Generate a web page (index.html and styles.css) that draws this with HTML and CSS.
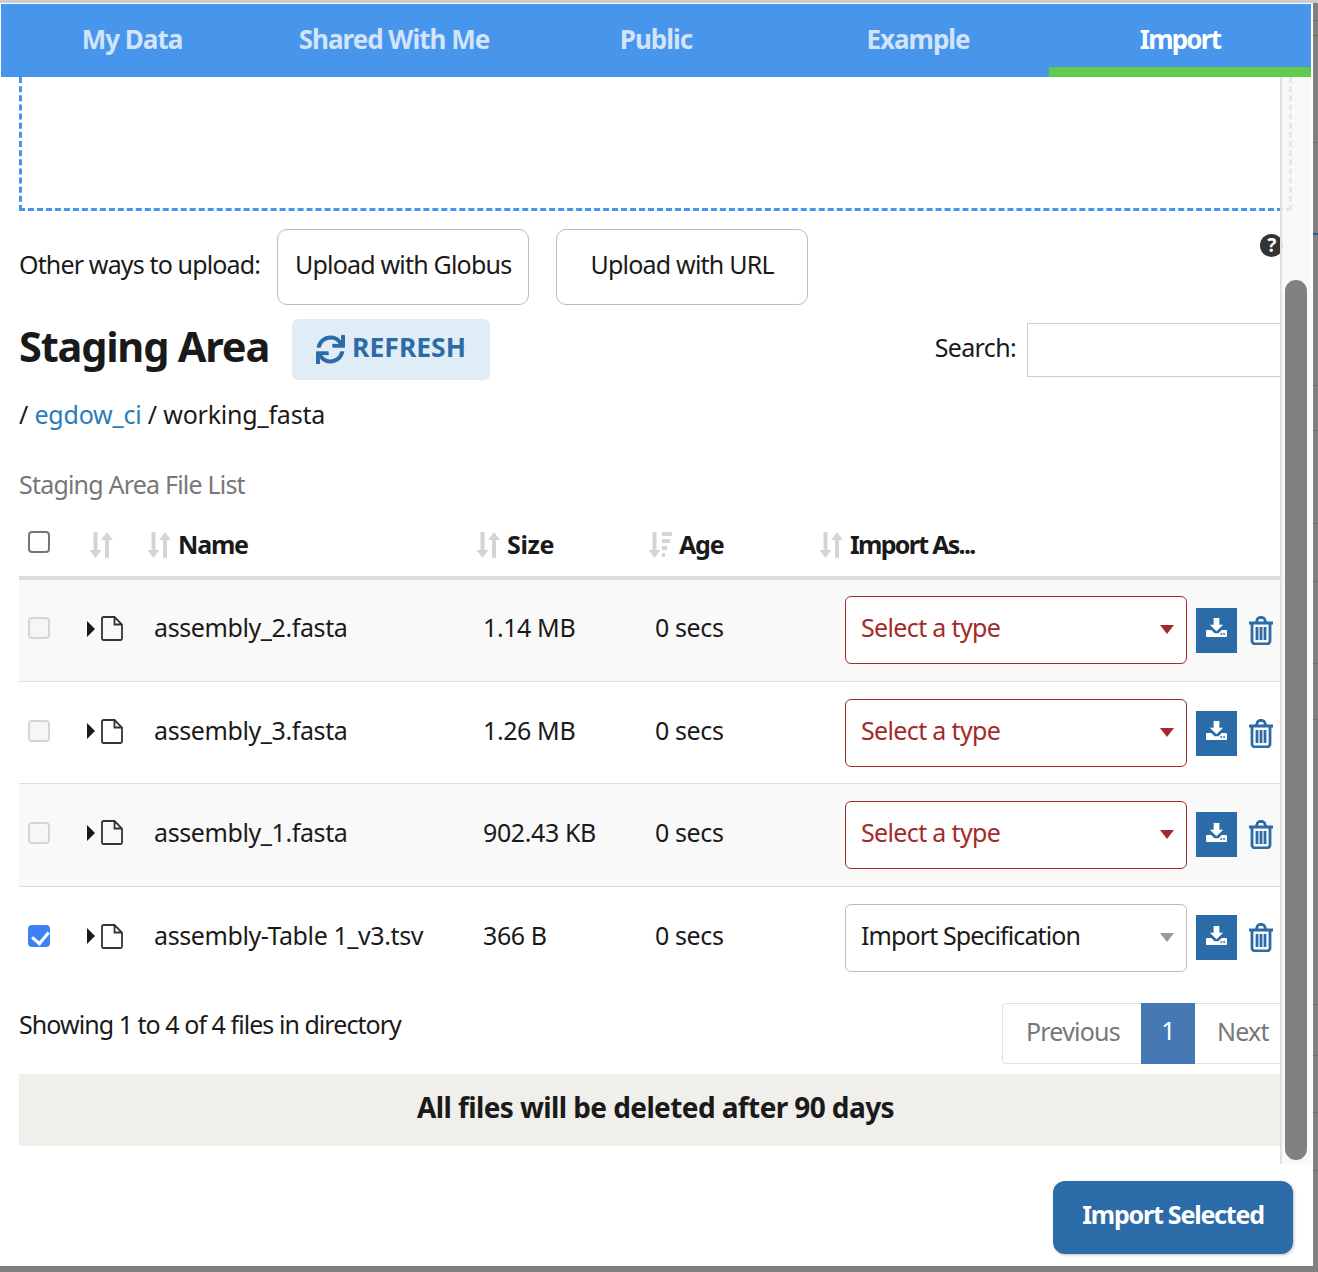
FILE: index.html
```html
<!DOCTYPE html>
<html lang="en">
<head>
    <meta charset="UTF-8">
    <meta name="viewport" content="width=device-width, initial-scale=1.0">
    <title>Import</title>
    <link rel="stylesheet" href="styles.css">
</head>
<body>
    <svg class="icon-defs" aria-hidden="true">
        <symbol id="i-sort" viewBox="0 0 24 28">
            <path d="M4.500 1h4v18h4l-6 8-6-8h4z"/>
            <path d="M18 1l6 8h-4v18h-4V9h-4z"/>
        </symbol>
        <symbol id="i-sort-age" viewBox="0 0 24 28">
            <path d="M4.500 1h4v18h4l-6 8-6-8h4z"/>
            <path d="M14 1h10v4H14zM14 8h8v4h-8zM14 15h5v4h-5zM14 22h3v4h-3z"/>
        </symbol>
        <symbol id="i-file" viewBox="0 0 22 25">
            <path d="M2.500 1h11l7.500 7.500V22.500a1.500 1.500 0 0 1-1.500 1.500h-17A1.500 1.500 0 0 1 1 22.500v-20A1.500 1.500 0 0 1 2.500 1zM13.500 1v7.500H21" fill="none" stroke="currentColor" stroke-width="1.800"/>
        </symbol>
        <symbol id="i-download" viewBox="0 0 22 22">
            <path d="M8 1h6v7h4l-7 7-7-7h4z"/>
            <path d="M1 13.500h4.500L9 17h4l3.500-3.500H21a1 1 0 0 1 1 1V20a1 1 0 0 1-1 1H1a1 1 0 0 1-1-1v-5.500a1 1 0 0 1 1-1z"/>
            <path d="M15 17h2v1.500h-2zM18 17h2v1.500h-2z" fill="#2b6ca8"/>
        </symbol>
        <symbol id="i-trash" viewBox="0 0 26 29">
            <path d="M1 7h24M4 7v18a3 3 0 0 0 3 3h12a3 3 0 0 0 3-3V7M8 7l1.500-4a3 3 0 0 1 2-1.500h3a3 3 0 0 1 2 1.500L18 7M9 11v13M13 11v13M17 11v13" fill="none" stroke="currentColor" stroke-width="2.800"/>
        </symbol>
        <symbol id="i-refresh" viewBox="0 0 512 512">
            <path d="M440.650 12.570l4 82.770A247.160 247.160 0 0 0 255.830 8C134.730 8 33.910 94.920 12.290 209.820A12 12 0 0 0 24.090 224h49.050a12 12 0 0 0 11.670-9.260 175.910 175.910 0 0 1 317-56.940l-101.460-4.860a12 12 0 0 0-12.570 12v47.410a12 12 0 0 0 12 12H500a12 12 0 0 0 12-12V12a12 12 0 0 0-12-12h-47.370a12 12 0 0 0-11.980 12.570zM255.830 432a175.610 175.610 0 0 1-146-77.800l101.800 4.870a12 12 0 0 0 12.570-12v-47.400a12 12 0 0 0-12-12H12a12 12 0 0 0-12 12V500a12 12 0 0 0 12 12h47.350a12 12 0 0 0 12-12.600l-4.150-82.570A247.170 247.170 0 0 0 255.830 504c121.110 0 221.930-86.920 243.550-201.820a12 12 0 0 0-11.800-14.180h-49.050a12 12 0 0 0-11.670 9.260A175.860 175.860 0 0 1 255.830 432z"/>
        </symbol>
    </svg>

    <div class="modal">
        <nav class="tabs">
            <a class="tab">My Data</a>
            <a class="tab">Shared With Me</a>
            <a class="tab">Public</a>
            <a class="tab">Example</a>
            <a class="tab active">Import</a>
        </nav>

        <div class="modal-body">
            <div class="dropzone"></div>

            <div class="other-ways">
                <span class="other-label">Other ways to upload:</span>
                <button class="btn-outline globus">Upload with Globus</button>
                <button class="btn-outline url">Upload with URL</button>
                <span class="help">?</span>
            </div>

            <div class="staging-head">
                <h2>Staging Area</h2>
                <button class="btn-refresh">
                    <svg class="refresh-icon"><use href="#i-refresh"/></svg>
                    <span class="refresh-label">REFRESH</span>
                </button>
                <label class="search"><span class="search-label">Search:</span> <input type="text"></label>
            </div>

            <div class="crumbs">/ <a>egdow_ci</a> / working_fasta</div>
            <div class="caption">Staging Area File List</div>

            <table class="files">
                <colgroup>
                    <col class="c-check"><col class="c-open"><col class="c-name"><col class="c-size"><col class="c-age"><col class="c-type">
                </colgroup>
                <thead>
                    <tr>
                        <th><input type="checkbox" class="check head-check"></th>
                        <th><svg class="sort"><use href="#i-sort"/></svg></th>
                        <th><svg class="sort"><use href="#i-sort"/></svg>Name</th>
                        <th class="th-size"><svg class="sort"><use href="#i-sort"/></svg>Size</th>
                        <th><svg class="sort"><use href="#i-sort-age"/></svg>Age</th>
                        <th class="th-import"><svg class="sort"><use href="#i-sort"/></svg>Import As...</th>
                    </tr>
                </thead>
                <tbody>
                    <tr>
                        <td><input type="checkbox" class="check" disabled></td>
                        <td><span class="caret"></span><svg class="file"><use href="#i-file"/></svg></td>
                        <td>assembly_2.fasta</td>
                        <td>1.14 MB</td>
                        <td>0 secs</td>
                        <td><div class="actions">
                            <div class="select invalid">Select a type</div>
                            <button class="btn-dl"><svg><use href="#i-download"/></svg></button>
                            <svg class="trash"><use href="#i-trash"/></svg>
                        </div></td>
                    </tr>
                    <tr>
                        <td><input type="checkbox" class="check" disabled></td>
                        <td><span class="caret"></span><svg class="file"><use href="#i-file"/></svg></td>
                        <td>assembly_3.fasta</td>
                        <td>1.26 MB</td>
                        <td>0 secs</td>
                        <td><div class="actions">
                            <div class="select invalid">Select a type</div>
                            <button class="btn-dl"><svg><use href="#i-download"/></svg></button>
                            <svg class="trash"><use href="#i-trash"/></svg>
                        </div></td>
                    </tr>
                    <tr>
                        <td><input type="checkbox" class="check" disabled></td>
                        <td><span class="caret"></span><svg class="file"><use href="#i-file"/></svg></td>
                        <td>assembly_1.fasta</td>
                        <td>902.43 KB</td>
                        <td>0 secs</td>
                        <td><div class="actions">
                            <div class="select invalid">Select a type</div>
                            <button class="btn-dl"><svg><use href="#i-download"/></svg></button>
                            <svg class="trash"><use href="#i-trash"/></svg>
                        </div></td>
                    </tr>
                    <tr>
                        <td><input type="checkbox" class="check" checked></td>
                        <td><span class="caret"></span><svg class="file"><use href="#i-file"/></svg></td>
                        <td>assembly-Table 1_v3.tsv</td>
                        <td>366 B</td>
                        <td>0 secs</td>
                        <td><div class="actions">
                            <div class="select spec">Import Specification</div>
                            <button class="btn-dl"><svg><use href="#i-download"/></svg></button>
                            <svg class="trash"><use href="#i-trash"/></svg>
                        </div></td>
                    </tr>
                </tbody>
            </table>

            <div class="table-foot">
                <span class="showing">Showing 1 to 4 of 4 files in directory</span>
                <div class="pager">
                    <a class="prev">Previous</a>
                    <a class="current">1</a>
                    <a class="next">Next</a>
                </div>
            </div>

            <div class="notice">All files will be deleted after 90 days</div>

            <div class="scroll-track"><div class="scroll-thumb"></div></div>
        </div>

        <div class="modal-foot">
            <button class="btn-import">Import Selected</button>
        </div>
    </div>
</body>
</html>
```

FILE: styles.css
```css
* {
    box-sizing: border-box;
}
body {
    margin: 0;
    padding: 0 5px 0 0;
    height: 1272px;
    overflow: hidden;
    border-top: 3px solid #cccccc;
    /* the dimmed page behind the dialog, its table lines show at the right edge */
    background: linear-gradient(#808080 20px, #6c6c6c 20px 21px, #808080 21px 35px, #4f7d40 35px 36px,
        #808080 36px 142px, #6c6c6c 142px 143px, #808080 143px 233px, #2b5c8f 233px 235px,
        #808080 235px 385px, #6c6c6c 385px 386px, #808080 386px 430px, #6c6c6c 430px 431px,
        #808080 431px 523px, #6c6c6c 523px 524px, #808080 524px 581px, #6c6c6c 581px 582px,
        #808080 582px 663px, #6c6c6c 663px 664px, #808080 664px 719px, #6c6c6c 719px 720px,
        #808080 720px 1004px, #6c6c6c 1004px 1005px, #808080 1005px 1055px, #6c6c6c 1055px 1056px,
        #808080 1056px 1112px, #6c6c6c 1112px 1113px, #808080 1113px 1170px, #6c6c6c 1170px 1171px,
        #808080 1171px);
    font-family: "Noto Sans", sans-serif;
    font-size: 25px;
    letter-spacing: -0.5px;
    color: #1a1a1a;
}
.icon-defs {
    display: none;
}
.modal {
    background: white;
    height: 1263px;
    border-top: 1px solid white;
    border-left: 1px solid white;
    border-right: 2px solid white;
}
.tabs {
    display: flex;
    height: 73px;
    background: #4896ec;
}
.tab {
    flex: 1;
    text-align: center;
    font-size: 26px;
    font-weight: 700;
    letter-spacing: -1px;
    line-height: 70px;
    color: rgba(255, 255, 255, 0.75);
}
.tab.active {
    color: white;
    letter-spacing: -1.800px;
    border-bottom: 10px solid #60cb4d;
}

/* body scrolls in the original, the scrollbar lies over the content */
.modal-body {
    position: relative;
    height: 1087px;
    width: 1291px;
    padding-left: 18px;
}
.dropzone {
    height: 134px;
    border: 3px dashed #4896ec;
    border-top: none;
}
.other-ways {
    display: flex;
    align-items: center;
    margin-top: 18px;
    position: relative;
}
.other-label {
    padding-bottom: 6px;
    letter-spacing: -0.850px;
}
.btn-outline {
    height: 76px;
    padding-bottom: 8px;
    background: white;
    border: 1px solid #bbbbbb;
    border-radius: 10px;
    font: inherit;
    letter-spacing: -0.800px;
    color: inherit;
}
.globus {
    width: 252px;
    margin-left: 17px;
}
.url {
    width: 252px;
    margin-left: 27px;
}
.help {
    position: absolute;
    right: 9px;
    top: 5px;
    width: 23px;
    height: 23px;
    border-radius: 50%;
    background: #333333;
    color: white;
    font-size: 19px;
    font-weight: 700;
    line-height: 23px;
    text-align: center;
}
.staging-head {
    display: flex;
    align-items: center;
    margin-top: 14px;
    height: 61px;
}
h2 {
    margin: 0;
    padding-bottom: 8px;
    font-size: 41.500px;
    font-weight: 700;
    letter-spacing: -1.200px;
    color: #1a1a1a;
}
.btn-refresh {
    display: flex;
    align-items: center;
    justify-content: center;
    gap: 7px;
    width: 198px;
    height: 61px;
    margin-left: 23px;
    background: #e1edf6;
    border: none;
    border-radius: 6px;
    font: inherit;
    font-size: 26.500px;
    font-weight: 700;
    letter-spacing: 0;
    color: #2b6ca8;
}
.refresh-label {
    padding-bottom: 6px;
}
.refresh-icon {
    width: 29px;
    height: 29px;
    fill: #2b6ca8;
}
.search {
    margin-left: auto;
    display: flex;
    align-items: center;
    gap: 11px;
}
.search-label {
    padding-bottom: 6px;
    letter-spacing: -0.650px;
}
.search input {
    width: 265px;
    height: 54px;
    border: 1px solid #cccccc;
    background: white;
}
.crumbs {
    margin-top: 16px;
    line-height: 36px;
    letter-spacing: -0.200px;
}
.crumbs a {
    color: #2b7bba;
}
.caption {
    margin-top: 34px;
    line-height: 36px;
    letter-spacing: -0.800px;
    color: #777777;
}
.files {
    width: 100%;
    table-layout: fixed;
    border-collapse: collapse;
    margin-top: 10px;
}
.c-check { width: 60px; }
.c-open { width: 58px; }
.c-name { width: 329px; }
.c-size { width: 172px; }
.c-age { width: 171px; }
.files th {
    height: 66px;
    padding: 0 0 0 10px;
    text-align: left;
    font-weight: 700;
    letter-spacing: -1.200px;
    border-bottom: 4px solid #dddddd;
}
.files .th-size {
    letter-spacing: -0.400px;
}
.files .th-import {
    letter-spacing: -1.700px;
}
.files td {
    height: 103px;
    padding: 0 0 6px 17px;
    border-bottom: 1px solid #dddddd;
    letter-spacing: -0.400px;
}
.files tbody tr:nth-child(2) td {
    height: 102px;
    padding-top: 2px;
}
.files tbody tr:nth-child(odd) {
    background: #f9f9f9;
}
.files tbody tr:last-child td {
    border-bottom: none;
}
.files th:first-child,
.files td:first-child {
    padding-left: 9px;
}
.files td:first-child {
    padding-bottom: 4px;
}
.files td:nth-child(2) {
    padding: 0 0 10px 8px;
}
.files td:last-child {
    padding: 0 0 0 36px;
}
.sort {
    width: 24px;
    height: 28px;
    margin-right: 7px;
    vertical-align: -5px;
    fill: #d4d4d4;
}
.check {
    appearance: none;
    display: block;
    position: relative;
    width: 22px;
    height: 22px;
    margin: 0;
    background: white;
    border: 2px solid #767676;
    border-radius: 4px;
}
.check:disabled {
    background: #f6f6f6;
    border-color: #d5d5d5;
}
.check:checked {
    background: #3b82f6;
    border-color: #3b82f6;
}
.check:checked::after {
    content: "";
    position: absolute;
    left: 5px;
    top: 1px;
    width: 8px;
    height: 13px;
    border: solid white;
    border-width: 0 3px 3px 0;
    transform: rotate(40deg);
}
.head-check {
    margin-top: -5px;
}
.caret {
    display: inline-block;
    width: 0;
    height: 0;
    margin-right: 6px;
    vertical-align: middle;
    border-left: 8px solid #1a1a1a;
    border-top: 8px solid transparent;
    border-bottom: 8px solid transparent;
}
.file {
    width: 22px;
    height: 25px;
    vertical-align: middle;
    color: #333333;
}
.actions {
    display: flex;
    align-items: center;
}
.select {
    position: relative;
    width: 342px;
    height: 68px;
    padding-left: 15px;
    background: white;
    border: 1px solid #bbbbbb;
    border-radius: 6px;
    letter-spacing: -0.650px;
    line-height: 60px;
}
.select.spec {
    letter-spacing: -0.900px;
}
.select::after {
    content: "";
    position: absolute;
    right: 12px;
    top: 28px;
    border-top: 9px solid #999999;
    border-left: 7px solid transparent;
    border-right: 7px solid transparent;
}
.select.invalid {
    border-color: #a32a2a;
    color: #a32a2a;
}
.select.invalid::after {
    border-top-color: #a32a2a;
}
.btn-dl {
    display: flex;
    align-items: center;
    justify-content: center;
    width: 41px;
    height: 45px;
    margin-left: 9px;
    padding: 0;
    background: #2b6ca8;
    border: none;
}
.btn-dl svg {
    width: 21px;
    height: 21px;
    margin-top: -5px;
    fill: white;
}
.trash {
    width: 26px;
    height: 29px;
    margin-left: 11px;
    color: #2b6ca8;
}
.table-foot {
    display: flex;
    justify-content: space-between;
    align-items: flex-start;
    margin-top: 14px;
}
.showing {
    line-height: 42px;
    letter-spacing: -0.950px;
}
.pager {
    display: flex;
    width: 290px;
    height: 61px;
    border: 1px solid #e0e0e0;
    border-radius: 4px;
    letter-spacing: -0.800px;
    line-height: 54px;
    color: #777777;
}
.prev {
    width: 138px;
    padding-left: 23px;
}
.next {
    padding-left: 22px;
}
.pager .current {
    width: 54px;
    margin: -1px 0;
    background: #4679b3;
    color: white;
    text-align: center;
}
.notice {
    height: 72px;
    margin-top: 10px;
    background: #f0efeb;
    text-align: center;
    font-size: 28px;
    font-weight: 700;
    letter-spacing: -0.600px;
    line-height: 66px;
}
.scroll-track {
    position: absolute;
    top: 0;
    right: -19px;
    bottom: 0;
    width: 31px;
    background: rgba(248, 248, 248, 0.85);
    border-left: 2px solid #e0e0e0;
}
.scroll-thumb {
    position: absolute;
    left: 3px;
    top: 203px;
    width: 22px;
    height: 880px;
    border-radius: 11px;
    background: #808080;
}
.modal-foot {
    display: flex;
    justify-content: flex-end;
    padding: 17px 18px 0 0;
}
.btn-import {
    width: 240px;
    height: 73px;
    padding-bottom: 8px;
    background: #2b6ca8;
    border: none;
    border-radius: 12px;
    box-shadow: 1px 1px 3px rgba(0, 0, 0, 0.25);
    font: inherit;
    font-weight: 700;
    letter-spacing: -1.200px;
    color: white;
}
```
